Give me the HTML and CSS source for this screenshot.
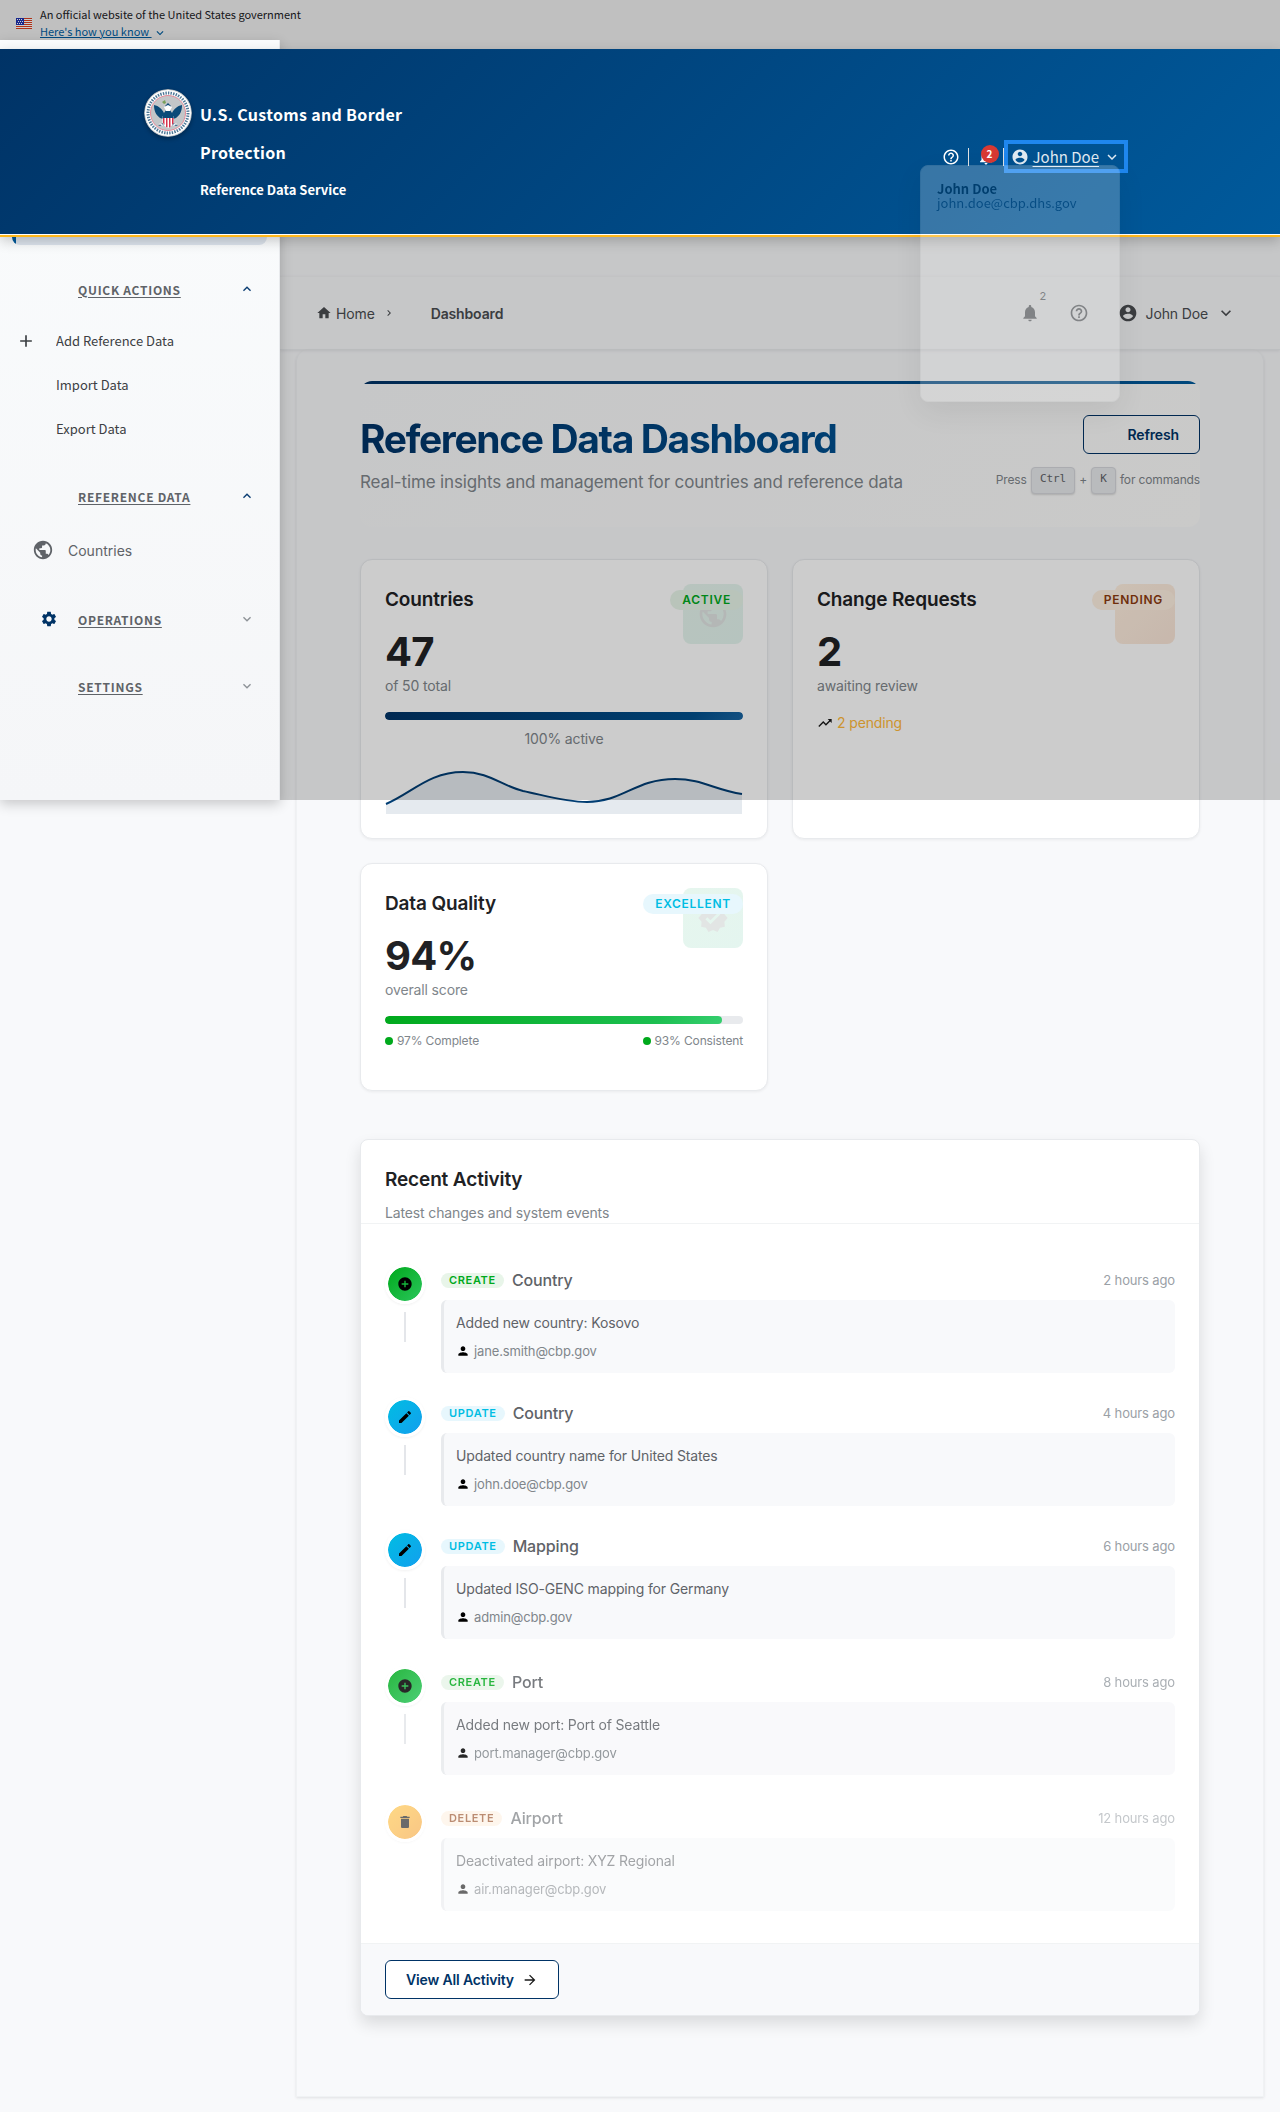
FILE: index.html
```html
<!DOCTYPE html>
<html lang="en">
<head>
<meta charset="utf-8">
<meta name="viewport" content="width=device-width, initial-scale=1">
<title>Reference Data Dashboard</title>
<link rel="stylesheet" href="styles.css">
</head>
<body>
<svg class="sprite" aria-hidden="true">
  <symbol id="globe" viewBox="0 0 24 24"><path d="M12 2C6.48 2 2 6.48 2 12s4.48 10 10 10 10-4.48 10-10S17.52 2 12 2zm-1 17.93c-3.95-.49-7-3.85-7-7.93 0-.62.08-1.21.21-1.79L9 15v1c0 1.1.9 2 2 2v1.93zm6.9-2.54c-.26-.81-1-1.39-1.9-1.39h-1v-3c0-.55-.45-1-1-1H8v-2h2c.55 0 1-.45 1-1V7h2c1.1 0 2-.9 2-2v-.41c2.93 1.19 5 4.06 5 7.41 0 2.08-.8 3.97-2.1 5.39z"/></symbol>
  <symbol id="gear" viewBox="0 0 24 24"><path d="M19.14 12.94c.04-.3.06-.61.06-.94 0-.32-.02-.64-.07-.94l2.03-1.58c.18-.14.23-.41.12-.61l-1.92-3.32c-.12-.22-.37-.29-.59-.22l-2.39.96c-.5-.38-1.03-.7-1.62-.94l-.36-2.54c-.04-.24-.24-.41-.48-.41h-3.84c-.24 0-.43.17-.47.41l-.36 2.54c-.59.24-1.13.57-1.62.94l-2.39-.96c-.22-.08-.47 0-.59.22L2.74 8.87c-.12.21-.08.47.12.61l2.03 1.58c-.05.3-.09.63-.09.94s.02.64.07.94l-2.03 1.58c-.18.14-.23.41-.12.61l1.92 3.32c.12.22.37.29.59.22l2.39-.96c.5.38 1.03.7 1.62.94l.36 2.54c.05.24.24.41.48.41h3.84c.24 0 .44-.17.47-.41l.36-2.54c.59-.24 1.13-.56 1.62-.94l2.39.96c.22.08.47 0 .59-.22l1.92-3.32c.12-.22.07-.47-.12-.61l-2.01-1.58zM12 15.6c-1.98 0-3.6-1.62-3.6-3.6s1.62-3.6 3.6-3.6 3.6 1.62 3.6 3.6-1.62 3.6-3.6 3.6z"/></symbol>
  <symbol id="bell" viewBox="0 0 24 24"><path d="M12 22c1.1 0 2-.9 2-2h-4c0 1.1.89 2 2 2zm6-6v-5c0-3.07-1.64-5.64-4.5-6.32V4c0-.83-.67-1.5-1.5-1.5s-1.5.67-1.5 1.5v.68C7.63 5.36 6 7.92 6 11v5l-2 2v1h16v-1l-2-2z"/></symbol>
  <symbol id="help" viewBox="0 0 24 24"><path d="M11 18h2v-2h-2v2zm1-16C6.48 2 2 6.48 2 12s4.48 10 10 10 10-4.48 10-10S17.52 2 12 2zm0 18c-4.41 0-8-3.59-8-8s3.59-8 8-8 8 3.59 8 8-3.59 8-8 8zm0-14c-2.21 0-4 1.79-4 4h2c0-1.1.9-2 2-2s2 .9 2 2c0 2-3 1.75-3 5h2c0-2.25 3-2.5 3-5 0-2.21-1.79-4-4-4z"/></symbol>
  <symbol id="account" viewBox="0 0 24 24"><path d="M12 2C6.48 2 2 6.48 2 12s4.48 10 10 10 10-4.48 10-10S17.52 2 12 2zm0 3c1.66 0 3 1.34 3 3s-1.34 3-3 3-3-1.34-3-3 1.34-3 3-3zm0 14.2c-2.5 0-4.71-1.28-6-3.22.03-1.99 4-3.08 6-3.08 1.99 0 5.97 1.09 6 3.08-1.29 1.94-3.5 3.22-6 3.22z"/></symbol>
  <symbol id="down" viewBox="0 0 24 24"><path d="M16.59 8.59L12 13.17 7.41 8.59 6 10l6 6 6-6z"/></symbol>
  <symbol id="up" viewBox="0 0 24 24"><path d="M12 8l-6 6 1.41 1.41L12 10.83l4.59 4.58L18 14z"/></symbol>
  <symbol id="next" viewBox="0 0 24 24"><path d="M10 6L8.59 7.41 13.17 12l-4.58 4.59L10 18l6-6z"/></symbol>
  <symbol id="home" viewBox="0 0 24 24"><path d="M10 20v-6h4v6h5v-8h3L12 3 2 12h3v8z"/></symbol>
  <symbol id="plus" viewBox="0 0 24 24"><path d="M19 13h-6v6h-2v-6H5v-2h6V5h2v6h6v2z"/></symbol>
  <symbol id="create" viewBox="0 0 24 24"><path d="M12 2C6.48 2 2 6.48 2 12s4.48 10 10 10 10-4.48 10-10S17.52 2 12 2zm5 11h-4v4h-2v-4H7v-2h4V7h2v4h4v2z"/></symbol>
  <symbol id="edit" viewBox="0 0 24 24"><path d="M3 17.25V21h3.75L17.81 9.94l-3.75-3.75L3 17.25zM20.71 7.04c.39-.39.39-1.02 0-1.41l-2.34-2.34c-.39-.39-1.02-.39-1.41 0l-1.83 1.83 3.75 3.75 1.83-1.83z"/></symbol>
  <symbol id="trash" viewBox="0 0 24 24"><path d="M6 19c0 1.1.9 2 2 2h8c1.1 0 2-.9 2-2V7H6v12zM19 4h-3.5l-1-1h-5l-1 1H5v2h14V4z"/></symbol>
  <symbol id="person" viewBox="0 0 24 24"><path d="M12 12c2.21 0 4-1.79 4-4s-1.79-4-4-4-4 1.79-4 4 1.79 4 4 4zm0 2c-2.67 0-8 1.34-8 4v2h16v-2c0-2.66-5.33-4-8-4z"/></symbol>
  <symbol id="trend" viewBox="0 0 24 24"><path d="M16 6l2.29 2.29-4.88 4.88-4-4L2 16.59 3.41 18l6-6 4 4 6.3-6.29L22 12V6z"/></symbol>
  <symbol id="verified" viewBox="0 0 24 24"><path d="M23 12l-2.44-2.79.34-3.69-3.61-.82-1.89-3.2L12 2.96 8.6 1.5 6.71 4.69 3.1 5.5l.34 3.7L1 12l2.44 2.79-.34 3.7 3.61.82L8.6 22.5l3.4-1.47 3.4 1.46 1.89-3.19 3.61-.82-.34-3.69L23 12zm-12.91 4.72l-3.8-3.81 1.48-1.48 2.32 2.33 5.85-5.87 1.48 1.48-7.33 7.35z"/></symbol>
  <symbol id="arrow" viewBox="0 0 24 24"><path d="M12 4l-1.41 1.41L16.17 11H4v2h12.17l-5.58 5.59L12 20l8-8z"/></symbol>
</svg>

<div class="backdrop"></div>

<section class="banner" aria-label="Official website">
  <svg class="flag" viewBox="0 0 16 11" aria-hidden="true">
    <path fill="#fff" d="M0 0h16v11H0z"/>
    <path fill="#db3e1f" d="M0 0h16v1H0zM0 2h16v1H0zM0 4h16v1H0zM0 6h16v1H0zM0 8h16v1H0zM0 10h16v1H0z"/>
    <path fill="#1e33b1" d="M0 0h8v7H0z"/>
    <path fill="#fff" d="M1 1h1v1H1zM3 1h1v1H3zM5 1h1v1H5zM2 3h1v1H2zM4 3h1v1H4zM6 3h1v1H6zM1 5h1v1H1zM3 5h1v1H3zM5 5h1v1H5z"/>
  </svg>
  <div class="banner-text">
    <p>An official website of the United States government</p>
    <a href="#how">Here's how you know&nbsp;</a><svg class="icon icon-16"><use href="#down"/></svg>
  </div>
</section>

<header class="header">
  <div class="header-inner">
    <svg class="seal" viewBox="0 0 48 48" aria-hidden="true">
      <circle cx="24" cy="24" r="24" fill="#b9bcbe"/>
      <circle cx="24" cy="24" r="23" fill="#fff"/>
      <circle cx="24" cy="24" r="20" fill="none" stroke="#4d7796" stroke-width="3" stroke-dasharray="1.400 1.200"/>
      <circle cx="24" cy="24" r="17.500" fill="#c3c6c8" stroke="#e58a97" stroke-width="1"/>
      <path fill="#0b4a78" d="M10 16c5 1 8 4 10 8l2-3-1-4 3-3 3 3-1 4 2 3c2-4 5-7 10-8 0 6-2 10-6 13l-3 1v4l5 3-7-1-3 2-3-2-7 1 5-3v-4l-3-1c-4-3-6-7-6-13z"/>
      <path fill="#fff" d="M20 18l4-2 4 2-2 4h-4zM15 34l5 2-2 1zM33 34l-5 2 2 1z"/>
      <path fill="#79a05a" d="M18 13l3-2 1 3-2 1z"/>
      <path fill="#fff" d="M18.500 27h11v7q-2 4-5.500 5-3.500-1-5.500-5z"/>
      <path fill="#d6334c" d="M19 29h1.500v7L19 34zM22 29h1.500v9.500L22 38zM25 29h1.500v9l-1.500.5zM28 29h1.500v5L28 36z"/>
      <path fill="#0b4a78" d="M18.500 26h11v3h-11z"/>
    </svg>
    <div class="brand">
      <p class="brand-name">U.S. Customs and Border Protection</p>
      <p class="brand-sub">Reference Data Service</p>
    </div>
    <nav class="header-tools" aria-label="Account tools">
      <button class="tool" type="button" aria-label="Help"><svg class="icon icon-18"><use href="#help"/></svg></button>
      <span class="rule"></span>
      <button class="tool tool-bell" type="button" aria-label="Notifications"><svg class="icon icon-18"><use href="#bell"/></svg><span class="count">2</span></button>
      <span class="rule"></span>
      <div class="user">
        <button class="user-button" type="button" aria-expanded="true"><svg class="icon icon-18"><use href="#account"/></svg><span>John Doe</span><svg class="icon icon-18"><use href="#down"/></svg></button>
        <div class="menu"><strong>John Doe</strong><span>john.doe@cbp.dhs.gov</span></div>
      </div>
    </nav>
  </div>
</header>

<aside class="drawer">
  <div class="drawer-active"></div>
  <nav class="groups" aria-label="Main">
    <section>
      <a class="group" href="#quick"><span></span><b>QUICK ACTIONS</b><svg class="icon icon-16"><use href="#up"/></svg></a>
      <ul>
        <li><a class="action" href="#add"><svg class="icon icon-20"><use href="#plus"/></svg><span>Add Reference Data</span></a></li>
        <li><a class="action" href="#import"><i></i><span>Import Data</span></a></li>
        <li><a class="action" href="#export"><i></i><span>Export Data</span></a></li>
      </ul>
    </section>
    <section>
      <a class="group" href="#reference"><span></span><b>REFERENCE DATA</b><svg class="icon icon-16"><use href="#up"/></svg></a>
      <ul>
        <li><a class="place" href="#countries"><svg class="icon icon-22"><use href="#globe"/></svg>Countries</a></li>
      </ul>
    </section>
    <section>
      <a class="group closed" href="#operations"><span><svg class="icon icon-18"><use href="#gear"/></svg></span><b>OPERATIONS</b><svg class="icon icon-16"><use href="#down"/></svg></a>
    </section>
    <section>
      <a class="group closed" href="#settings"><span></span><b>SETTINGS</b><svg class="icon icon-16"><use href="#down"/></svg></a>
    </section>
  </nav>
</aside>

<div class="shell">
  <div class="topbar">
    <nav class="crumbs" aria-label="Breadcrumb">
      <a href="#home"><svg class="icon icon-16"><use href="#home"/></svg>Home</a>
      <svg class="icon icon-12"><use href="#next"/></svg>
      <span class="current">Dashboard</span>
    </nav>
    <div class="topbar-tools">
      <button class="alerts" type="button" aria-label="Notifications"><svg class="icon icon-20"><use href="#bell"/></svg><span>2</span></button>
      <button type="button" aria-label="Help"><svg class="icon icon-20"><use href="#help"/></svg></button>
      <button class="person" type="button"><svg class="icon icon-20"><use href="#account"/></svg><span>John Doe</span><svg class="icon icon-20"><use href="#down"/></svg></button>
    </div>
  </div>

  <main class="page">
    <section class="hero">
      <div>
        <h1>Reference Data Dashboard</h1>
        <p>Real-time insights and management for countries and reference data</p>
      </div>
      <div class="hero-side">
        <button class="button refresh" type="button">Refresh</button>
        <p class="hint">Press <kbd>Ctrl</kbd> + <kbd>K</kbd> for commands</p>
      </div>
    </section>

    <section class="cards">
      <article class="card">
        <div class="tile green"><svg class="icon icon-32"><use href="#globe"/></svg></div>
        <div class="card-head"><h2>Countries</h2><span class="status active">ACTIVE</span></div>
        <p class="figure">47</p>
        <p class="label">of 50 total</p>
        <div class="meter"><div class="fill blue" style="width:100%"></div></div>
        <p class="caption">100% active</p>
        <svg class="chart" viewBox="0 0 358 60" preserveAspectRatio="none" aria-hidden="true">
          <path class="area" d="M1 50C27 39 44 18 78 18C104 18 117 32 138 37C158 41 180 48 202 48C238 48 250 25 290 25C317 25 330 36 357 40V60H1z"/>
          <path class="line" d="M1 50C27 39 44 18 78 18C104 18 117 32 138 37C158 41 180 48 202 48C238 48 250 25 290 25C317 25 330 36 357 40"/>
        </svg>
      </article>
      <article class="card">
        <div class="tile orange"></div>
        <div class="card-head"><h2>Change Requests</h2><span class="status pending">PENDING</span></div>
        <p class="figure">2</p>
        <p class="label">awaiting review</p>
        <p class="trend"><svg class="icon icon-16"><use href="#trend"/></svg>2 pending</p>
      </article>
      <article class="card">
        <div class="tile green"><svg class="icon icon-32"><use href="#verified"/></svg></div>
        <div class="card-head"><h2>Data Quality</h2><span class="status excellent">EXCELLENT</span></div>
        <p class="figure">94%</p>
        <p class="label">overall score</p>
        <div class="meter"><div class="fill lime" style="width:94%"></div></div>
        <div class="legend"><span>97% Complete</span><span>93% Consistent</span></div>
      </article>
    </section>

    <section class="activity">
      <div class="activity-head">
        <h2>Recent Activity</h2>
        <p>Latest changes and system events</p>
      </div>
      <ol class="events">
        <li class="event">
          <div class="rail"><span class="dot create"><svg class="icon icon-16"><use href="#create"/></svg></span></div>
          <div class="event-body">
            <div class="event-head"><span class="tag create">CREATE</span><h3>Country</h3><time>2 hours ago</time></div>
            <div class="note"><p>Added new country: Kosovo</p><small><svg class="icon icon-14"><use href="#person"/></svg>jane.smith@cbp.gov</small></div>
          </div>
        </li>
        <li class="event">
          <div class="rail"><span class="dot update"><svg class="icon icon-16"><use href="#edit"/></svg></span></div>
          <div class="event-body">
            <div class="event-head"><span class="tag update">UPDATE</span><h3>Country</h3><time>4 hours ago</time></div>
            <div class="note"><p>Updated country name for United States</p><small><svg class="icon icon-14"><use href="#person"/></svg>john.doe@cbp.gov</small></div>
          </div>
        </li>
        <li class="event">
          <div class="rail"><span class="dot update"><svg class="icon icon-16"><use href="#edit"/></svg></span></div>
          <div class="event-body">
            <div class="event-head"><span class="tag update">UPDATE</span><h3>Mapping</h3><time>6 hours ago</time></div>
            <div class="note"><p>Updated ISO-GENC mapping for Germany</p><small><svg class="icon icon-14"><use href="#person"/></svg>admin@cbp.gov</small></div>
          </div>
        </li>
        <li class="event entering">
          <div class="rail"><span class="dot create"><svg class="icon icon-16"><use href="#create"/></svg></span></div>
          <div class="event-body">
            <div class="event-head"><span class="tag create">CREATE</span><h3>Port</h3><time>8 hours ago</time></div>
            <div class="note"><p>Added new port: Port of Seattle</p><small><svg class="icon icon-14"><use href="#person"/></svg>port.manager@cbp.gov</small></div>
          </div>
        </li>
        <li class="event entering faint">
          <div class="rail"><span class="dot delete"><svg class="icon icon-16"><use href="#trash"/></svg></span></div>
          <div class="event-body">
            <div class="event-head"><span class="tag delete">DELETE</span><h3>Airport</h3><time>12 hours ago</time></div>
            <div class="note"><p>Deactivated airport: XYZ Regional</p><small><svg class="icon icon-14"><use href="#person"/></svg>air.manager@cbp.gov</small></div>
          </div>
        </li>
      </ol>
      <div class="activity-foot">
        <button class="button" type="button">View All Activity<svg class="icon icon-16"><use href="#arrow"/></svg></button>
      </div>
    </section>
  </main>
</div>
</body>
</html>
```
FILE: styles.css
```css
:root {
  --navy: #003366;
  --text: #202124;
  --muted: #80868b;
  --line: #e8eaed;
  --sans: Inter, "Liberation Sans", sans-serif;
  --gov: "Noto Sans CJK SC", "Noto Sans", sans-serif;
}

* { box-sizing: border-box; }

body {
  position: relative;
  margin: 0;
  background: #f8f9fb;
  color: var(--text);
  font-family: var(--sans);
  font-size: 14px;
  letter-spacing: -0.01em;
}

p, h1, h2, h3, ul, ol { margin: 0; padding: 0; }
ul, ol { list-style: none; }
button { padding: 0; border: 0; background: none; color: inherit; font: inherit; letter-spacing: inherit; cursor: pointer; }
a { color: inherit; text-decoration: none; }

.sprite { position: absolute; width: 0; height: 0; }
.icon { flex: none; fill: currentColor; }
.icon-12 { width: 12px; height: 12px; }
.icon-14 { width: 14px; height: 14px; }
.icon-16 { width: 16px; height: 16px; }
.icon-18 { width: 18px; height: 18px; }
.icon-20 { width: 20px; height: 20px; }
.icon-22 { width: 22px; height: 22px; }
.icon-32 { width: 32px; height: 32px; }

/* Dimmed layer behind the open drawer, one screen tall */
.backdrop {
  position: absolute;
  z-index: 10;
  top: 0;
  left: 0;
  width: 100%;
  height: 800px;
  background: rgba(0, 0, 0, .2);
}

/* Government banner */
.banner {
  display: flex;
  align-items: center;
  gap: 8px;
  padding: 6px 16px 9px;
  background: #f0f0f0;
  font-family: var(--gov);
  font-size: 11px;
  line-height: 17px;
  letter-spacing: 0;
}
.flag { width: 16px; height: 11px; }
.banner a { color: #005ea2; text-decoration: underline; }
.banner .icon { height: 14px; color: #005ea2; vertical-align: -4px; }

/* Site header */
.header {
  position: relative;
  z-index: 20;
  border-bottom: 2px solid #ffb81c;
  box-shadow: 0 4px 12px rgba(0, 0, 0, .2);
  color: #fff;
  font-family: var(--gov);
  letter-spacing: 0;
}
.header-inner {
  display: flex;
  align-items: flex-start;
  padding: 40px 152px 25px 144px;
  border-bottom: 1px solid #fff;
  background: linear-gradient(135deg, #003366 0%, #005a9c 100%);
}
.seal { flex: none; width: 48px; height: 48px; border-radius: 50%; box-shadow: 0 2px 4px rgba(0, 0, 0, .3); }
.brand { width: 240px; margin: 6px auto 0 8px; font-weight: 700; line-height: 38px; }
.brand-name { font-size: 16px; letter-spacing: 0.02em; }
.brand-sub { font-size: 13px; }
.header-tools { display: flex; align-items: center; gap: 8px; margin-top: 51px; }
.tool { position: relative; display: flex; }
.rule { width: 1px; height: 18px; background: #dfe1e2; }
.count {
  position: absolute;
  top: -3px;
  left: 4px;
  width: 18px;
  border-radius: 9px;
  background: #d83933;
  font-size: 10px;
  font-weight: 700;
  line-height: 18px;
  text-align: center;
}
.user { position: relative; margin-left: -8px; }
.user-button {
  display: flex;
  align-items: center;
  gap: 4px;
  padding: 0 3px;
  border: 4px solid #1f87ee;
  font-size: 15px;
  line-height: 25px;
  color: #e0eaf2;
}
.user-button span { text-decoration: underline; text-underline-offset: 3px; }
.menu {
  position: absolute;
  top: 25px;
  right: 8px;
  display: flex;
  flex-direction: column;
  width: 200px;
  min-height: 237px;
  padding: 16px;
  border: 1px solid #dfe1e2;
  border-radius: 8px;
  background: #fff;
  box-shadow: 0 10px 30px rgba(0, 0, 0, .3);
  color: #1b3a57;
  font-size: 13px;
  line-height: 14px;
  opacity: .22;
}
.menu strong { color: #000; }

/* Drawer */
.drawer {
  position: absolute;
  z-index: 11;
  top: 40px;
  left: 0;
  width: 280px;
  height: 760px;
  border-right: 1px solid var(--line);
  background: linear-gradient(#fafcfd, #f5f6f8);
  box-shadow: 0 4px 12px rgba(0, 0, 0, .2);
  font-family: var(--gov);
  letter-spacing: 0;
}
.drawer-active {
  height: 44px;
  margin: 161px 12px 22px;
  border-radius: 8px;
  background: linear-gradient(90deg, #005a9c 4px, #dce3ec 4px);
}
.groups { display: flex; flex-direction: column; gap: 23px; }
.groups ul { padding-top: 8px; }
.group { display: flex; align-items: center; height: 44px; padding: 0 24px 0 40px; color: #0b3d73; }
.group > span { display: flex; width: 38px; color: var(--navy); }
.group b { flex: 1; color: #5f6368; font-size: 12px; letter-spacing: 0.06em; text-decoration: underline; text-underline-offset: 2px; }
.group.closed > .icon { color: #8d9297; }
.action { display: flex; align-items: center; gap: 20px; height: 44px; padding-left: 16px; color: #3c4043; font-size: 13px; }
.action i { width: 20px; }
.action span { overflow: hidden; line-height: 14px; }
.place { display: flex; align-items: center; gap: 14px; height: 48px; padding-left: 32px; color: #5f6368; font: 14px var(--sans); }

/* Page frame */
.shell { margin-left: 280px; padding: 39px 0 16px; }
.topbar {
  display: flex;
  align-items: center;
  justify-content: space-between;
  height: 74px;
  padding: 0 44px 0 36px;
  border-top: 1px solid #f3f4f6;
  border-bottom: 1px solid #eceef0;
  box-shadow: 0 1px 3px rgba(0, 0, 0, .08);
  color: #4a4d50;
}
.crumbs, .crumbs a { display: flex; align-items: center; }
.crumbs a { gap: 4px; margin-right: 8px; }
.current { margin-left: 36px; font-weight: 600; }
.topbar-tools { display: flex; align-items: center; gap: 29px; }
.topbar-tools button { display: flex; align-items: center; }
.topbar-tools > :not(.person) { color: #75797d; }
.alerts { position: relative; }
.alerts span { position: absolute; top: -14px; left: 20px; font-size: 11px; line-height: 14px; }
.topbar-tools .person { gap: 8px; }

.page {
  margin: 0 16px;
  padding: 31px 63px 80px;
  border: 1px solid #f0f2f4;
  border-top: 0;
  border-radius: 12px 12px 0 0;
  box-shadow: 0 1px 3px rgba(0, 0, 0, .1);
}

.hero {
  position: relative;
  display: flex;
  justify-content: space-between;
  height: 146px;
  margin-bottom: 32px;
  padding-top: 34px;
  overflow: hidden;
  border-radius: 12px;
  background: linear-gradient(135deg, #f8f9fb, #fdfdfc);
}
.hero::before { content: ""; position: absolute; top: 0; left: 0; width: 100%; height: 3px; background: linear-gradient(90deg, #003366, #005a9c); }
h1 {
  width: max-content;
  background: linear-gradient(90deg, #003366, #004f8f);
  background-clip: text;
  color: transparent;
  font-size: 39px;
  font-weight: 700;
  line-height: 48px;
  letter-spacing: -0.035em;
}
.hero h1 + p { margin-top: 5px; color: var(--muted); font-size: 17px; line-height: 28px; }
.hero-side { display: flex; flex-direction: column; align-items: flex-end; gap: 12px; }
.button {
  display: flex;
  align-items: center;
  gap: 8px;
  height: 39px;
  padding: 0 20px;
  border: 1px solid var(--navy);
  border-radius: 6px;
  background: #fff;
  color: var(--navy);
  font-weight: 600;
}
.refresh { padding-left: 44px; background: none; }
.button .icon { color: #1a1a1a; }
.hint { color: var(--muted); font-size: 12px; line-height: 27px; }
kbd {
  display: inline-block;
  margin: 0 1px;
  padding: 0 8px 3px;
  border: 1px solid #d6d8dd;
  border-radius: 4px;
  background: #e8eaed;
  box-shadow: 0 1px 2px rgba(0, 0, 0, .15);
  color: #5f6368;
  font-family: "DejaVu Sans Mono", monospace;
  font-size: 11px;
  line-height: 22px;
  vertical-align: 2px;
}

/* Summary cards */
.cards { display: grid; grid-template-columns: 1fr 1fr; gap: 24px; margin-bottom: 48px; }
.card {
  position: relative;
  padding: 24px;
  border: 1px solid var(--line);
  border-radius: 12px;
  background: #fff;
  box-shadow: 0 1px 3px rgba(0, 0, 0, .06);
}
.card-head { position: relative; display: flex; align-items: center; justify-content: space-between; height: 32px; }
h2 { font-size: 19px; font-weight: 600; line-height: 32px; }
.status { padding: 0 12px; border-radius: 10px; font-size: 12px; font-weight: 600; line-height: 20px; letter-spacing: 0.06em; }
.active { background: #e8f5e9; color: #00a91c; }
.pending { background: #fef0e1; color: #8b3a0e; }
.excellent { background: #e7f7fd; color: #00bde3; }
.tile { position: absolute; top: 24px; right: 24px; display: grid; place-items: center; width: 60px; height: 60px; border-radius: 8px; color: #e2e5e4; }
.green { background: linear-gradient(135deg, #e6f6ee, #e4f5ef); }
.orange { background: linear-gradient(135deg, #fff0e0, #fae6d8); }
.figure { margin-top: 12px; font-size: 40px; font-weight: 700; line-height: 48px; letter-spacing: -0.02em; }
.label { color: var(--muted); line-height: 20px; }
.meter { height: 8px; margin-top: 16px; overflow: hidden; border-radius: 4px; background: var(--line); }
.fill { height: 8px; border-radius: 4px; }
.blue { background: linear-gradient(135deg, #003366, #004f8c 85%, #1a66a3); }
.lime { background: linear-gradient(135deg, #00a91c, #1cbf50 80%, #36cf70); }
.caption { margin-top: 8px; color: var(--muted); line-height: 22px; text-align: center; }
.chart { display: block; width: 100%; height: 60px; margin-top: 4px; }
.area { fill: #003366; opacity: .1; }
.line { fill: none; stroke: #003d73; stroke-width: 2; }
.trend { display: flex; align-items: center; gap: 4px; margin-top: 16px; color: #ffb93a; line-height: 22px; }
.trend .icon { color: #1a1a1a; }
.legend { display: flex; justify-content: space-between; margin: 8px 0 16px; color: var(--muted); font-size: 12px; line-height: 18px; }
.legend span { display: flex; align-items: center; gap: 4px; }
.legend span::before { content: ""; width: 8px; height: 8px; border-radius: 50%; background: #00a91c; }

/* Recent activity */
.activity {
  overflow: hidden;
  border: 1px solid var(--line);
  border-radius: 8px;
  background: #fff;
  box-shadow: 0 8px 16px rgba(0, 0, 0, .12);
}
.activity-head { padding: 24px 24px 0; border-bottom: 1px solid #f1f3f4; }
.activity-head p { margin-top: 7px; color: var(--muted); line-height: 20px; }
.events { display: flex; flex-direction: column; gap: 24px; padding: 40px 24px 32px; }
.event { display: flex; gap: 16px; }
.entering { margin-top: 3px; opacity: .84; }
.faint { opacity: .58; }
.rail { display: flex; flex: none; flex-direction: column; align-items: center; gap: 8px; width: 40px; }
.event:not(:last-child) .rail::after { content: ""; width: 2px; height: 30px; background: #e4e6ea; }
.dot { display: grid; place-items: center; width: 40px; height: 40px; border: 3px solid #fff; border-radius: 50%; box-shadow: 0 1px 3px rgba(0, 0, 0, .06); color: #000; }
.dot.create { background: linear-gradient(135deg, #00a91c, #2bc65c) padding-box; }
.dot.update { background: linear-gradient(135deg, #00bde3, #139fee) padding-box; }
.dot.delete { background: linear-gradient(135deg, #ffbe2e, #f59e2e) padding-box; }
.event-body { flex: 1; }
.event-head { display: flex; align-items: center; gap: 8px; height: 24px; margin: 4px 0 8px; }
.tag { padding: 0 8px; border-radius: 8px; font-size: 11px; font-weight: 600; line-height: 15px; letter-spacing: 0.06em; }
.tag.create { background: #e8f5e9; color: #00a91c; }
.tag.update { background: #e7f7fd; color: #00bde3; }
.tag.delete { background: #fef0e1; color: #8b3a0e; }
h3 { color: #5f6368; font-size: 16px; font-weight: 500; }
time { margin-left: auto; color: #9aa0a6; font-size: 13px; }
.note { padding: 12px 12px 13px; border-left: 3px solid var(--line); border-radius: 6px; background: #f8f9fb; color: #5f6368; line-height: 22px; }
.note small { display: flex; align-items: center; gap: 4px; margin-top: 8px; color: var(--muted); font-size: 13px; line-height: 18px; }
.note .icon { color: #000; }
.activity-foot { padding: 16px 24px; border-top: 1px solid #f1f3f4; background: #f8f9fb; }
```
